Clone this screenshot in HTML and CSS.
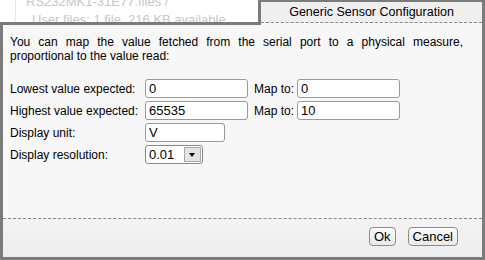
FILE: index.html
```html
<!DOCTYPE html>
<html lang="en">
<head>
    <meta charset="UTF-8">
    <meta name="viewport" content="width=device-width, initial-scale=1.0">
    <title>Generic Sensor Configuration</title>
    <link rel="stylesheet" href="styles.css">
</head>
<body>
    <div class="files">
        <div class="files-path">RS232MK1-31E77.files /</div>
        <div class="files-info">User files: 1 file, 216 KB available</div>
    </div>

    <div class="dialog">
        <div class="dialog-head">
            <div class="head-gap"></div>
            <div class="tab">
                <div class="tab-title">Generic Sensor Configuration</div>
            </div>
        </div>
        <div class="dialog-body">
            <div class="dialog-content">
                <p class="intro">You can map the value fetched from the serial port to a physical measure, proportional to the value read:</p>
                <div class="form-row">
                    <label for="lowVal">Lowest value expected:</label>
                    <input type="text" id="lowVal" value="0">
                    <label class="map-label" for="lowMap">Map to:</label>
                    <input type="text" id="lowMap" value="0">
                </div>
                <div class="form-row">
                    <label for="highVal">Highest value expected:</label>
                    <input type="text" id="highVal" value="65535">
                    <label class="map-label" for="highMap">Map to:</label>
                    <input type="text" id="highMap" value="10">
                </div>
                <div class="form-row">
                    <label for="unit">Display unit:</label>
                    <input type="text" id="unit" class="short" value="V">
                </div>
                <div class="form-row">
                    <label>Display resolution:</label>
                    <div class="select">
                        <span class="select-value">0.01</span>
                        <span class="select-arrow"></span>
                    </div>
                </div>
            </div>
            <div class="dialog-footer">
                <button type="button">Ok</button>
                <button type="button">Cancel</button>
            </div>
        </div>
    </div>
</body>
</html>
```

FILE: styles.css
```css
* {
    margin: 0;
    padding: 0;
    box-sizing: border-box;
    font-family: "Liberation Sans", Arial, sans-serif;
}
body {
    width: 485px;
    height: 260px;
    position: relative;
    overflow: hidden;
    background: #fff;
}
/* page behind the dialog */
.files {
    margin: -6px 0 0 15px;
    padding-left: 10px;
    border-left: 1px solid #e6e6e6;
    color: #c6c6c6;
    font-size: 13px;
    line-height: 16px;
}
.files-info {
    padding: 2px 0 0 6px;
}
/* dialog */
.dialog {
    position: absolute;
    top: 0;
    left: 0;
    width: 485px;
    height: 260px;
    display: flex;
    flex-direction: column;
}
.dialog-head {
    display: flex;
    height: 25px;
}
.head-gap {
    flex: 1;
    border-bottom: 3px solid #7b7b7b;
}
.tab {
    width: 227px;
    border: 3px solid #7b7b7b;
    border-top-width: 2px;
    border-bottom: none;
    background: #f7f7f7;
}
.tab-title {
    height: 21px;
    background: #efefef;
    border-bottom: 1px dashed #8a8a8a;
    font-size: 12.5px;
    line-height: 20px;
    text-align: center;
    color: #000;
}
.dialog-body {
    flex: 1;
    display: flex;
    flex-direction: column;
    border: 3px solid #7b7b7b;
    border-top: none;
    background: #f7f7f7;
}
.dialog-content {
    flex: 1;
    padding: 10px 19px 0 7px;
    font-size: 12px;
    color: #000;
}
.intro {
    line-height: 14px;
    text-align: justify;
    margin-bottom: 16px;
}
.form-row {
    display: flex;
    align-items: center;
    height: 19px;
    margin-bottom: 3px;
}
.form-row label {
    width: 135px;
}
.form-row .map-label {
    width: auto;
    margin: 0 3px 0 6px;
}
.form-row input {
    width: 103px;
    height: 19px;
    padding: 0 3px;
    font-size: 13px;
    color: #000;
    background: #fff;
    border: 1px solid #9a9a9a;
    border-radius: 3px;
    outline: none;
}
.form-row input.short {
    width: 80px;
}
.select {
    display: flex;
    align-items: center;
    width: 58px;
    height: 19px;
    padding: 1px;
    background: #fff;
    border: 1px solid #8a8a8a;
    border-radius: 3px;
}
.select-value {
    flex: 1;
    padding-left: 2px;
    font-size: 13px;
}
.select-arrow {
    position: relative;
    width: 17px;
    height: 15px;
    background: #e4e4e4;
    border: 1px solid #a8a8a8;
}
.select-arrow::after {
    content: "";
    position: absolute;
    left: 4px;
    top: 5px;
    border-left: 3.5px solid transparent;
    border-right: 3.5px solid transparent;
    border-top: 4px solid #000;
}
.dialog-footer {
    display: flex;
    justify-content: flex-end;
    align-items: center;
    gap: 12px;
    height: 39px;
    padding: 0 24px 4px 0;
    border-top: 1px dashed #8a8a8a;
    background: linear-gradient(#f3f3f3, #ededed);
}
.dialog-footer button {
    height: 19px;
    padding: 0 4px;
    font-size: 13px;
    color: #000;
    background: linear-gradient(#fafafa, #e9e9e9);
    border: 1px solid #8c8c8c;
    border-radius: 4px;
    cursor: pointer;
}
```
